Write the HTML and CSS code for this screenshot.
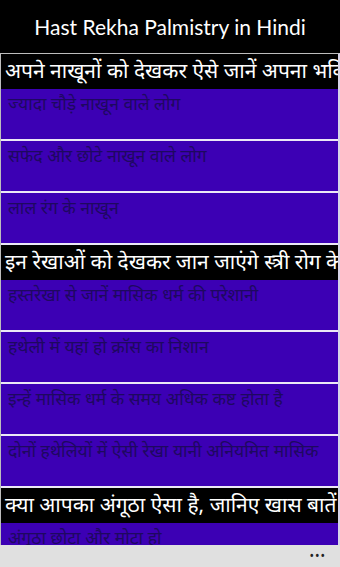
FILE: index.html
```html
<!DOCTYPE html>
<html lang="hi">
<head>
    <meta charset="UTF-8">
    <meta name="viewport" content="width=device-width, initial-scale=1.0">
    <title>Hast Rekha Palmistry in Hindi</title>
    <link rel="stylesheet" href="styles.css">
</head>
<body>
    <div id="app">
        <div class="title-bar">Hast Rekha Palmistry in Hindi</div>

        <div class="list">
            <div class="group-head">अपने नाखूनों को देखकर ऐसे जानें अपना भविष्य</div>
            <div class="item">ज्यादा चौड़े नाखून वाले लोग</div>
            <div class="item">सफेद और छोटे नाखून वाले लोग</div>
            <div class="item">लाल रंग के नाखून</div>

            <div class="group-head">इन रेखाओं को देखकर जान जाएंगे स्त्री रोग के बारे में</div>
            <div class="item">हस्तरेखा से जानें मासिक धर्म की परेशानी</div>
            <div class="item">हथेली में यहां हो क्रॉस का निशान</div>
            <div class="item">इन्हें मासिक धर्म के समय अधिक कष्ट होता है</div>
            <div class="item">दोनों हथेलियों में ऐसी रेखा यानी अनियमित मासिक</div>

            <div class="group-head">क्या आपका अंगूठा ऐसा है, जानिए खास बातें</div>
            <div class="item">अंगूठा छोटा और मोटा हो</div>
        </div>

        <div class="app-bar">
            <span class="more">&bull;&bull;&bull;</span>
        </div>
    </div>
</body>
</html>
```

FILE: styles.css
```css
body {
    margin: 0;
    padding: 0;
    background-color: #000;
    font-family: "Noto Sans", "Open Sans", sans-serif;
}

#app {
    width: 340px;
    height: 567px;
    display: flex;
    flex-direction: column;
    overflow: hidden;
    background-color: #000;
}

.title-bar {
    height: 53px;
    flex-shrink: 0;
    color: #fff;
    font-family: Lato, "Noto Sans", sans-serif;
    font-size: 21px;
    text-align: center;
    line-height: 53px;
}

.list {
    flex: 1;
    overflow: hidden;
    border-top: 1px solid #bdbdbd;
    border-left: 1px solid #bdbdbd;
    border-right: 2px solid #d8d4e8;
    background-color: #ece8f6;
}

.group-head {
    height: 35px;
    line-height: 33px;
    padding-left: 4px;
    background-color: #000;
    color: #fff;
    font-size: 21px;
    white-space: nowrap;
    overflow: hidden;
}

.item {
    height: 50px;
    margin-bottom: 2px;
    padding: 0 0 0 7px;
    box-sizing: border-box;
    line-height: 28px;
    background-color: #3c00b4;
    color: #1e0860;
    font-size: 17.5px;
    white-space: nowrap;
    overflow: hidden;
}

.app-bar {
    height: 22px;
    flex-shrink: 0;
    background-color: #e0e0e0;
    display: flex;
    justify-content: flex-end;
    align-items: center;
    padding-right: 14px;
}

.more {
    color: #222;
    font-size: 12px;
    letter-spacing: 1px;
    line-height: 1;
}
```
